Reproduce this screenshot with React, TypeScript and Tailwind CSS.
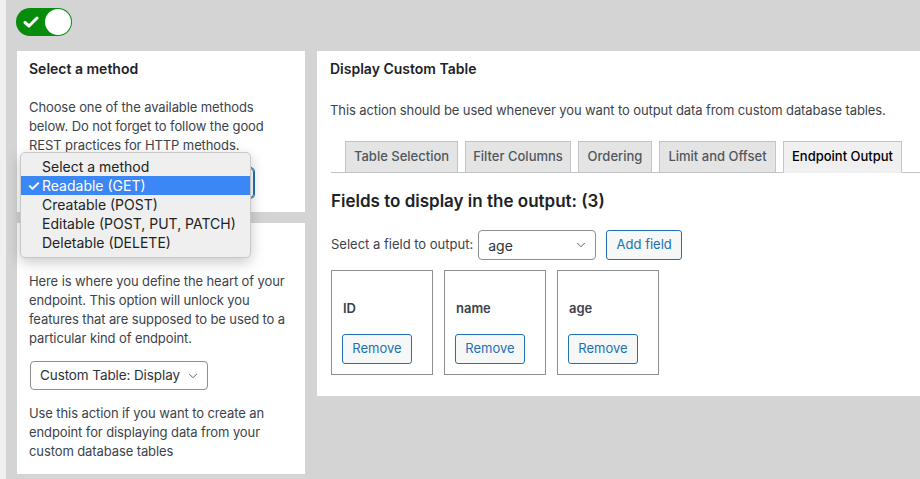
import { ChevronDown } from 'lucide-react'

const font = { fontFamily: 'Inter, "Noto Sans", sans-serif' }

function Toggle() {
  return (
    <div className="relative ml-[10px] mt-[8px] h-[28px] w-[56px] rounded-full bg-[#078c0c]">
      <svg className="absolute left-[7px] top-[8px]" width="16" height="12" viewBox="0 0 16 12">
        <path d="M2 6.5 L6 10 L14 2" fill="none" stroke="#fff" strokeWidth="3" strokeLinecap="round" strokeLinejoin="round" />
      </svg>
      <div className="absolute right-[1px] top-[1px] h-[26px] w-[26px] rounded-full bg-white" />
    </div>
  )
}

function Select({ label, className }: { label: string; className?: string }) {
  return (
    <div
      className={`flex items-center justify-between gap-[4px] whitespace-nowrap rounded-[4px] border border-[#8c8f94] bg-white pl-[9px] pr-[7px] text-[#2c3338] ${className ?? ''}`}
    >
      <span>{label}</span>
      <ChevronDown size={14} strokeWidth={1.6} className="shrink-0 text-[#50575e]" />
    </div>
  )
}

function WpButton({ children, className }: { children: React.ReactNode; className?: string }) {
  return (
    <button
      type="button"
      className={`flex items-center justify-center rounded-[3px] border border-[#2271b1] bg-[#f6f7f7] text-[13px] text-[#2271b1] ${className ?? ''}`}
    >
      {children}
    </button>
  )
}

const tabs = [
  { name: 'Table Selection', w: 'w-[113px]' },
  { name: 'Filter Columns', w: 'w-[106px]' },
  { name: 'Ordering', w: 'w-[74px]' },
  { name: 'Limit and Offset', w: 'w-[117px]' },
  { name: 'Endpoint Output', w: 'w-[119px]', active: true },
]

const fields = ['ID', 'name', 'age']

const methods = ['Select a method', 'Readable (GET)', 'Creatable (POST)', 'Editable (POST, PUT, PATCH)', 'Deletable (DELETE)']

export default function App() {
  return (
    <div className="relative flex h-[479px] w-[920px] overflow-hidden bg-[#d4d4d4]" style={font}>
      <div className="w-[6px] shrink-0 bg-[#f0f0f1]" />

      <div className="flex flex-col">
        <Toggle />

        <div className="ml-[11px] mt-[15px] flex items-start gap-[12px]">
          {/* left column */}
          <div className="flex w-[288px] shrink-0 flex-col gap-[11px]">
            <div className="h-[161px] bg-white px-[12px] pt-[8px]">
              <h2 className="text-[14px] font-semibold leading-[20px] text-[#1d2327]">Select a method</h2>
              <p className="mt-[19px] text-[13px] leading-[19px] tracking-[-0.1px] text-[#3c434a]">
                Choose one of the available methods below. Do not forget to follow the good REST practices for HTTP
                methods.
              </p>
              <div className="mt-[13px] h-[30px] w-[225px] rounded-[4px] border border-[#2271b1] shadow-[0_0_0_1px_#2271b1]" />
            </div>

            <div className="h-[251px] bg-white px-[12px] pt-[8px]">
              {/* title row sits under the open menu */}
              <div className="h-[20px]" />
              <p className="mt-[21px] text-[13px] leading-[19px] tracking-[-0.1px] text-[#3c434a]">
                Here is where you define the heart of your endpoint. This option will unlock you features that are
                supposed to be used to a particular kind of endpoint.
              </p>
              <Select
                label="Custom Table: Display"
                className="ml-[1px] mt-[13px] h-[29px] w-[178px] text-[13.5px] tracking-[-0.1px]"
              />
              <p className="mt-[14px] text-[13px] leading-[19px] tracking-[-0.1px] text-[#3c434a]">
                Use this action if you want to create an endpoint for displaying data from your custom database tables
              </p>
            </div>
          </div>

          {/* right panel */}
          <div className="h-[345px] w-[640px] shrink-0 bg-white pl-[13px] pt-[8px]">
            <h2 className="text-[14px] font-semibold leading-[20px] text-[#1d2327]">Display Custom Table</h2>
            <p className="mt-[22px] text-[13px] leading-[19px] tracking-[-0.1px] text-[#3c434a]">
              This action should be used whenever you want to output data from custom database tables.
            </p>

            <div className="ml-[1px] mt-[21px] flex gap-[7px] border-b border-[#c3c4c7] pl-[14px]">
              {tabs.map((tab) => (
                <div
                  key={tab.name}
                  className={`-mb-px flex h-[32px] items-center justify-center border border-[#c3c4c7] text-[13px] font-medium ${tab.w} ${
                    tab.active ? 'border-b-[#f0f0f1] bg-[#f0f0f1] text-[#000]' : 'bg-[#e4e4e4] text-[#50575e]'
                  }`}
                >
                  {tab.name}
                </div>
              ))}
            </div>

            <h3 className="ml-[1px] mt-[17px] text-[17px] font-semibold leading-[22px] text-[#1d2327]">
              Fields to display in the output: (3)
            </h3>

            <div className="ml-[1px] mt-[18px] flex items-center">
              <span className="text-[13px] text-[#3c434a]">Select a field to output:</span>
              <Select label="age" className="ml-[5px] h-[30px] w-[118px] text-[14px]" />
              <WpButton className="ml-[10px] h-[30px] w-[76px]">Add field</WpButton>
            </div>

            <div className="ml-[1px] mt-[10px] flex gap-[11px]">
              {fields.map((f) => (
                <div key={f} className="h-[105px] w-[102px] border border-[#8c8f94] px-[10px] pt-[27px]">
                  <div className="pl-[1px] text-[13px] font-semibold leading-[20px] text-[#3c434a]">{f}</div>
                  <WpButton className="mt-[16px] h-[30px] w-[70px]">Remove</WpButton>
                </div>
              ))}
            </div>
          </div>
        </div>
      </div>

      {/* open native select menu */}
      <div className="absolute left-[20px] top-[152px] w-[231px] rounded-[5px] border border-[#c8c8c8] bg-[#efefef] pb-[5px] pt-[4px] shadow-[0_4px_14px_rgba(0,0,0,0.22)]">
        {methods.map((m, i) => (
          <div
            key={m}
            className={`relative h-[19px] pl-[21px] text-[14px] leading-[19px] ${
              i === 1 ? 'bg-[#3b87f5] text-white' : 'text-[#222]'
            }`}
          >
            {i === 1 && <span className="absolute left-[6px] top-0 text-[15px] font-semibold">✓</span>}
            {m}
          </div>
        ))}
      </div>
    </div>
  )
}
